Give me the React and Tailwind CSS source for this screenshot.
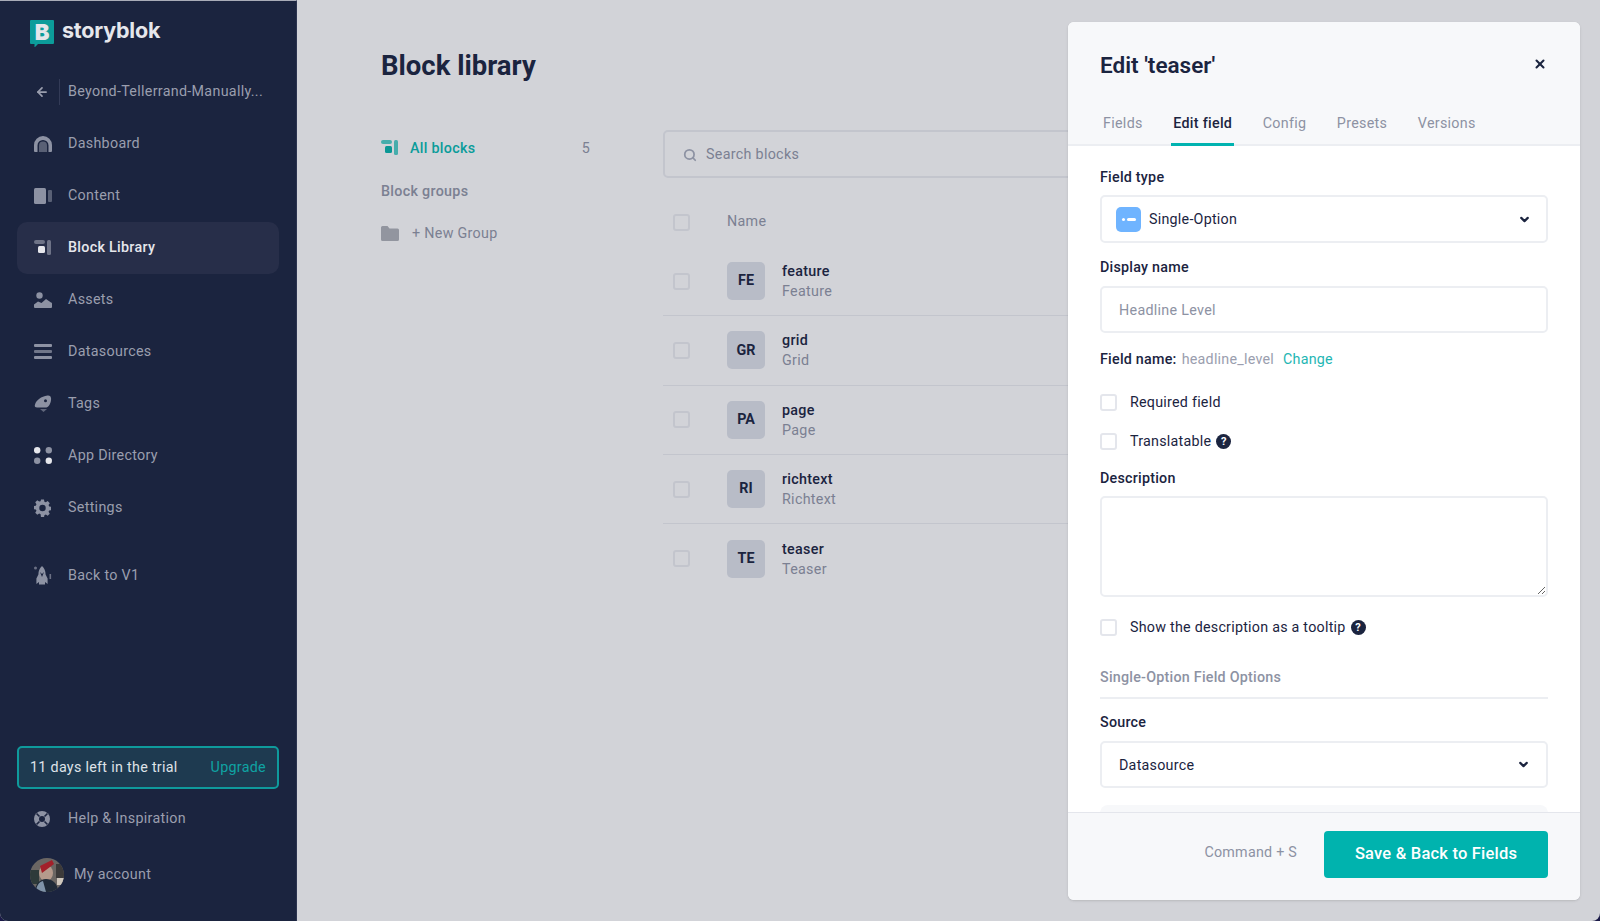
import { Search, X, ChevronDown, ArrowLeft } from 'lucide-react';

const ROBOTO = { fontFamily: 'Roboto, sans-serif' };

// sidebar icons, all drawn on an 18x18 box
function DashboardIcon() {
  return (
    <svg width="18" height="16" viewBox="0 0 18 16" fill="currentColor">
      <path d="M0 15V9a9 9 0 0 1 18 0v6a1 1 0 0 1-1 1h-2.5V9.5a5.5 5.5 0 0 0-11 0V16H1a1 1 0 0 1-1-1z" />
      <path d="M5 16V9.5a4 4 0 0 1 8 0V16z" opacity=".55" />
    </svg>
  );
}

function ContentIcon() {
  return (
    <svg width="18" height="16" viewBox="0 0 18 16" fill="currentColor">
      <rect x="0" y="0" width="12" height="16" rx="1.5" />
      <rect x="14" y="2" width="4" height="12" rx="1" opacity=".55" />
    </svg>
  );
}

function BlocksIcon({ back = 'currentColor', front = 'currentColor' }) {
  return (
    <svg width="18" height="16" viewBox="0 0 18 16">
      <rect x="0" y="0" width="11" height="4" rx="2" fill={back} opacity=".7" />
      <rect x="4" y="6" width="7" height="7" rx="1.5" fill={front} />
      <rect x="13" y="0" width="4" height="15" rx="1.5" fill={back} opacity=".7" />
    </svg>
  );
}

function AssetsIcon() {
  return (
    <svg width="18" height="16" viewBox="0 0 18 16" fill="currentColor">
      <circle cx="5.5" cy="3.5" r="3.2" />
      <path d="M0 12.5l4-3 3.5 1.5L12 7l5 3.5a1 1 0 0 1 1 1V15a1 1 0 0 1-1 1H1a1 1 0 0 1-1-1z" />
    </svg>
  );
}

function DatasourcesIcon() {
  return (
    <svg width="18" height="15" viewBox="0 0 18 15" fill="currentColor">
      <rect width="18" height="3" rx="1" />
      <rect y="6" width="18" height="3" rx="1" opacity=".75" />
      <rect y="12" width="18" height="3" rx="1" />
    </svg>
  );
}

function TagsIcon() {
  return (
    <svg width="18" height="18" viewBox="0 0 18 18" fill="currentColor">
      <path d="M1 9.5C2.5 5 7 1.5 13.5 0.5c2.2-.3 3.6 1 3.6 3.2 0 3.6-1.6 7.6-4.6 8.8H3.2C1 12.5.3 11.3 1 9.5zm10.5-5.3a1.5 1.5 0 1 0 0 3 1.5 1.5 0 0 0 0-3z" fillRule="evenodd" />
      <path d="M6 14h7l-3.5 3z" opacity=".6" />
    </svg>
  );
}

function AppsIcon() {
  return (
    <svg width="18" height="17" viewBox="0 0 18 17">
      <circle cx="3.2" cy="3.2" r="3.2" fill="#e6e7ec" />
      <circle cx="14.8" cy="3.2" r="3.2" fill="#8d92a3" />
      <circle cx="3.2" cy="13.8" r="3.2" fill="#8d92a3" />
      <circle cx="14.8" cy="13.8" r="3.2" fill="#e6e7ec" />
    </svg>
  );
}

function SettingsIcon() {
  return (
    <svg width="17" height="18" viewBox="0 0 18 18" fill="currentColor">
      <path
        fillRule="evenodd"
        d="M7.4 0h3.2l.4 2.3 1.5.7 2-1.3 2.2 2.2-1.3 2 .7 1.5 2.300.4v3.400l-2.300.4-.7 1.5 1.300 2-2.200 2.200-2-1.300-1.500.7-.4 2.300H7.4L7 15.600l-1.500-.7-2 1.300-2.200-2.200 1.300-2-.7-1.500L-.4 10.400V7l2.300-.5.7-1.500-1.300-2 2.200-2.200 2 1.300L7 1.900zM9 5.600a3.400 3.400 0 1 0 0 6.800 3.400 3.400 0 0 0 0-6.800z"
      />
    </svg>
  );
}

function RocketIcon() {
  return (
    <svg width="18" height="20" viewBox="0 0 18 20" fill="currentColor">
      <circle cx="1.500" cy="2" r="1.500" opacity=".7" />
      <path fillRule="evenodd" d="M8 0c2.400 2 3.600 5 3.600 8.500l2 4V18l-2.600-2v2.500H5V16l-2.600 2v-5.500l2-4C4.400 5 5.600 2 8 0zM6 6l2 5 2-5-2 2z" />
      <rect x="15.500" y="8" width="1.600" height="5" opacity=".7" />
    </svg>
  );
}

function HelpIcon() {
  return (
    <svg width="16" height="16" viewBox="0 0 16 16">
      <circle cx="8" cy="8" r="8" fill="currentColor" />
      <circle cx="8" cy="8" r="3" fill="#1b243f" />
      <path d="M2.500 2.500l3 3M13.500 2.500l-3 3M2.500 13.500l3-3M13.500 13.500l-3-3" stroke="#1b243f" strokeWidth="1.600" />
    </svg>
  );
}

function Logo() {
  return (
    <span className="relative h-[27px] w-[24px] shrink-0">
      <svg width="24" height="27" viewBox="0 0 24 27">
        <path d="M1 0h22a1 1 0 0 1 1 1v22a1 1 0 0 1-1 1H8l-3.500 3.500V24H1a1 1 0 0 1-1-1V1a1 1 0 0 1 1-1z" fill="#0c9c9a" />
      </svg>
      <span
        className="absolute left-0 top-0 flex h-[24px] w-[24px] items-center justify-center text-[22px] font-black leading-none text-[#e4e6ea]"
        style={{ fontFamily: 'Inter, sans-serif' }}
      >
        B
      </span>
    </span>
  );
}

function Avatar() {
  return (
    <svg width="34" height="34" viewBox="0 0 34 34" className="shrink-0">
      <defs>
        <clipPath id="avatar-clip">
          <circle cx="17" cy="17" r="17" />
        </clipPath>
      </defs>
      <g clipPath="url(#avatar-clip)">
        <rect width="34" height="34" fill="#6b6663" />
        <rect x="0" y="12" width="9" height="14" fill="#2e3a3a" />
        <rect x="26" y="6" width="8" height="14" fill="#3c3a3a" />
        <rect x="27" y="20" width="7" height="7" fill="#cfc7bd" />
        <ellipse cx="16" cy="15" rx="7" ry="8" fill="#b59a8c" />
        <path d="M10 8l12-6 2 4-12 9z" fill="#a3202a" />
        <path d="M5 34c0-8 5-13 11-13s12 4 12 13z" fill="#1f2a38" />
        <path d="M6 34c0-6 3-10 7-11l3 11z" fill="#7f93a8" />
      </g>
    </svg>
  );
}

const navItems = [
  { label: 'Dashboard', icon: <DashboardIcon /> },
  { label: 'Content', icon: <ContentIcon /> },
  { label: 'Block Library', icon: <BlocksIcon back="#8d92a3" front="#e6e7ec" />, active: true },
  { label: 'Assets', icon: <AssetsIcon /> },
  { label: 'Datasources', icon: <DatasourcesIcon /> },
  { label: 'Tags', icon: <TagsIcon /> },
  { label: 'App Directory', icon: <AppsIcon /> },
  { label: 'Settings', icon: <SettingsIcon /> },
];

function NavItem({ label, icon, active }) {
  return (
    <a
      className={`flex h-[52px] items-center rounded-[10px] pl-[17px] text-[14.3px] tracking-[0.3px] ${
        active ? 'bg-[#272e49] font-medium text-[#e6e7ec]' : 'text-[#9a9eae]'
      }`}
    >
      <span className="flex w-[34px] shrink-0 items-center text-[#8d92a3]">{icon}</span>
      {label}
    </a>
  );
}

function Sidebar() {
  return (
    <aside className="flex h-full w-[297px] shrink-0 flex-col border-r border-t border-r-[#2c3450] border-t-[#a9acb8] bg-[#1b243f] px-[17px] pb-[29px] pt-[19px]">
      <div className="flex h-[27px] items-center gap-[8px] pl-[13px]">
        <Logo />
        <span className="-mt-[6px] text-[21.5px] font-bold leading-[27px] tracking-[-0.2px] text-[#e6e7ec]" style={{ fontFamily: 'Inter, sans-serif' }}>
          storyblok
        </span>
      </div>

      <div className="mt-[32px] flex h-[26px] items-center">
        <span className="flex w-[42px] shrink-0 justify-end pr-[10px] text-[#9a9eae]">
          <ArrowLeft size={14} strokeWidth={3} />
        </span>
        <span className="h-full w-px bg-[#333b57]" />
        <span className="ml-2 truncate text-[14.3px] tracking-[0.3px] text-[#9a9eae]">Beyond-Tellerrand-Manually...</span>
      </div>

      <nav className="mt-[12.5px] flex flex-col">
        {navItems.map((item) => (
          <NavItem key={item.label} {...item} />
        ))}
        <div className="mt-[16px]">
          <NavItem label="Back to V1" icon={<RocketIcon />} />
        </div>
      </nav>

      <div className="mt-auto flex flex-col">
        <div className="flex h-[43px] items-center justify-between rounded-[5px] border-2 border-[#0f9a9c] bg-[#1e3a50] pl-[11px] pr-[11px] text-[14.3px] tracking-[0.3px]">
          <span className="text-[#dfe2e8]">11 days left in the trial</span>
          <span className="text-[#0fa3a3]">Upgrade</span>
        </div>
        <div className="mt-[4px]">
          <NavItem label="Help & Inspiration" icon={<HelpIcon />} />
        </div>
        <div className="mt-[13px] flex items-center gap-[10px] pl-[13px] text-[14.3px] tracking-[0.3px] text-[#9a9eae]">
          <Avatar />
          My account
        </div>
      </div>
    </aside>
  );
}

const blocks = [
  { code: 'FE', name: 'feature', title: 'Feature' },
  { code: 'GR', name: 'grid', title: 'Grid' },
  { code: 'PA', name: 'page', title: 'Page' },
  { code: 'RI', name: 'richtext', title: 'Richtext' },
  { code: 'TE', name: 'teaser', title: 'Teaser' },
];

function DimCheck() {
  return <span className="h-[17px] w-[17px] shrink-0 rounded-[3px] border-2 border-[#c3c5cd]" />;
}

function BlockLibrary() {
  return (
    <main className="min-w-0 flex-1 overflow-hidden pl-[84px] pt-[46px] tracking-[0.3px]">
      <h1 className="text-[27.5px] font-bold leading-[40px] tracking-normal text-[#1b243f]">Block library</h1>

      <div className="mt-[44px] flex">
        <div className="w-[282px] shrink-0">
          <div className="flex w-[209px] items-center pt-[6px] text-[14.3px] leading-[24px]">
            <span className="w-[29px]">
              <BlocksIcon back="#0a9c9a" front="#0b9795" />
            </span>
            <span className="font-medium text-[#0b9c9a]">All blocks</span>
            <span className="ml-auto text-[#7b8092]">5</span>
          </div>
          <div className="mt-[19px] text-[14.3px] font-medium leading-[24px] text-[#7b8092]">Block groups</div>
          <div className="mt-[18px] flex items-center text-[14.3px] leading-[24px] text-[#7b8092]">
            <svg width="18" height="15" viewBox="0 0 18 15" fill="#92959f" className="mr-[13px]">
              <path d="M1.500 0h5l2 2.500h8a1.500 1.500 0 0 1 1.500 1.500v9.500a1.500 1.500 0 0 1-1.500 1.500h-15A1.500 1.500 0 0 1 0 13.500v-12A1.500 1.500 0 0 1 1.500 0z" />
            </svg>
            + New Group
          </div>
        </div>

        <div className="w-[700px] shrink-0">
          <div className="flex h-[48px] items-center rounded-[5px] border-2 border-[#c3c5cd] pl-[18px] pt-[1px] text-[14.3px] text-[#7b8092]">
            <Search size={14} strokeWidth={3} className="mr-[9px] text-[#8d92a3]" />
            Search blocks
          </div>
          <div className="mt-[25px] flex h-[38px] items-center pl-[10px] text-[14.3px] text-[#7b8092]">
            <DimCheck />
            <span className="ml-[37px]">Name</span>
          </div>
          <div className="mt-[6px]">
            {blocks.map((b) => (
              <div key={b.code} className="flex h-[69.3px] items-center border-b border-[#c3c5cd] pl-[10px] last:border-b-0">
                <DimCheck />
                <span className="ml-[37px] flex h-[38px] w-[38px] items-center justify-center rounded-[5px] bg-[#b8bcc7] text-[14.3px] font-bold tracking-normal text-[#1b243f]">
                  {b.code}
                </span>
                <div className="ml-[17px] text-[14.3px] leading-[20px]">
                  <div className="font-medium text-[#1b243f]">{b.name}</div>
                  <div className="text-[#7b8092]">{b.title}</div>
                </div>
              </div>
            ))}
          </div>
        </div>
      </div>
    </main>
  );
}

function Help() {
  return (
    <span className="ml-[5px] flex h-[15px] w-[15px] items-center justify-center rounded-full bg-[#1b243f] text-[11px] font-bold leading-none tracking-normal text-white">
      ?
    </span>
  );
}

function CheckRow({ label, help, className }) {
  return (
    <label className={`flex h-[20px] items-center text-[14.3px] text-[#1b243f] ${className}`}>
      <input type="checkbox" className="mr-[13px] h-[17px] w-[17px] appearance-none rounded-[3px] border-2 border-[#e4e6ec] bg-white" />
      <span className="mt-[2px]">{label}</span>
      {help && <Help />}
    </label>
  );
}

function FieldLabel({ children, className }) {
  return <div className={`h-[20px] text-[14.3px] font-medium leading-[20px] text-[#1b243f] ${className}`}>{children}</div>;
}

function EditPanel() {
  const tabs = ['Fields', 'Edit field', 'Config', 'Presets', 'Versions'];

  return (
    <div className="absolute bottom-[21px] right-[20px] top-[22px] flex w-[512px] flex-col overflow-hidden rounded-[6px] bg-white tracking-[0.24px] shadow-sm">
      <header className="h-[124px] shrink-0 border-b-2 border-[#eceef2] bg-[#f7f8fa] pl-[32px] pr-[33px]">
        <div className="flex items-center justify-between pt-[27px]">
          <h2 className="text-[22.500px] font-semibold leading-[32px] tracking-normal text-[#1b243f]">Edit 'teaser'</h2>
          <X size={14} strokeWidth={3.5} className="-mt-[3px] text-[#1b243f]" />
        </div>
        <div className="ml-[1px] mt-[31px] flex gap-[26.5px] tracking-[0.3px]">
          {tabs.map((t) => (
            <span
              key={t}
              className={`h-[34px] border-b-[3px] px-[2px] text-[14.300px] leading-[22px] ${
                t === 'Edit field' ? 'border-[#00b3b0] font-medium text-[#1b243f]' : 'border-transparent text-[#8d92a3]'
              }`}
            >
              {t}
            </span>
          ))}
        </div>
      </header>

      <div className="min-h-0 flex-1 overflow-hidden px-[32px] pt-[21px]">
        <FieldLabel>Field type</FieldLabel>
        <div className="mt-[8px] flex h-[48px] items-center rounded-[5px] border-2 border-[#eceef2] pl-[14px] pr-[15px] text-[14.300px] text-[#1b243f]">
          <span className="mr-[8px] flex h-[25px] w-[25px] items-center justify-center gap-[2px] rounded-[5px] bg-[#6fb4ff]">
            <span className="h-[3px] w-[3px] rounded-full bg-white" />
            <span className="h-[3px] w-[9px] rounded-full bg-white" />
          </span>
          <span className="mt-[2px]">Single-Option</span>
          <ChevronDown size={13} strokeWidth={4} className="ml-auto" />
        </div>

        <FieldLabel className="mt-[14px]">Display name</FieldLabel>
        <input
          readOnly
          placeholder="Headline Level"
          className="mt-[9px] h-[47px] w-full rounded-[5px] border-2 border-[#eceef2] pl-[17px] text-[14.300px] tracking-[0.3px] outline-none placeholder:text-[#8d92a3]"
        />

        <div className="mt-[17px] flex h-[20px] items-center text-[14.300px]">
          <span className="font-medium text-[#1b243f]">Field name:</span>
          <span className="ml-[5px] text-[#9a9eae]">headline_level</span>
          <span className="ml-[9px] text-[#1eb6b3]">Change</span>
        </div>

        <CheckRow label="Required field" className="mt-[22px]" />
        <CheckRow label="Translatable" help className="mt-[19px]" />

        <FieldLabel className="mt-[17px]">Description</FieldLabel>
        <textarea readOnly className="mt-[8px] block h-[101px] w-full rounded-[5px] border-2 border-[#eceef2] outline-none" />

        <CheckRow label="Show the description as a tooltip" help className="mt-[20px]" />

        <div className="mt-[30px] h-[20px] text-[14.300px] font-medium leading-[20px] text-[#8d92a3]">Single-Option Field Options</div>
        <div className="mt-[10px] border-t-2 border-[#eceef2]" />

        <FieldLabel className="mt-[13px]">Source</FieldLabel>
        <div className="mt-[9px] flex h-[47px] items-center rounded-[5px] border-2 border-[#eceef2] pl-[17px] pr-[16px] text-[14.300px] text-[#1b243f]">
          <span className="mt-[2px]">Datasource</span>
          <ChevronDown size={13} strokeWidth={4} className="ml-auto" />
        </div>
        <div className="mt-[17px] h-[40px] rounded-[8px] bg-[#f7f8fa]" />
      </div>

      <footer className="flex h-[88px] shrink-0 items-center justify-end border-t border-[#e4e6ec] bg-[#f7f8fa] pb-[5px] pr-[32px]">
        <span className="mb-[2px] mr-[27px] text-[14.300px] text-[#8d92a3]">Command + S</span>
        <button className="h-[47px] w-[224px] rounded-[4px] bg-[#00b3ae] text-[16.500px] font-medium tracking-[0.2px] text-white">
          Save &amp; Back to Fields
        </button>
      </footer>
    </div>
  );
}

export default function App() {
  return (
    <div className="h-[921px] w-full overflow-hidden bg-[#1b1a48]" style={ROBOTO}>
      <div className="relative flex h-full w-full overflow-hidden rounded-b-[8px] bg-[#d2d3d8]">
        <Sidebar />
        <BlockLibrary />
        <EditPanel />
      </div>
    </div>
  );
}
